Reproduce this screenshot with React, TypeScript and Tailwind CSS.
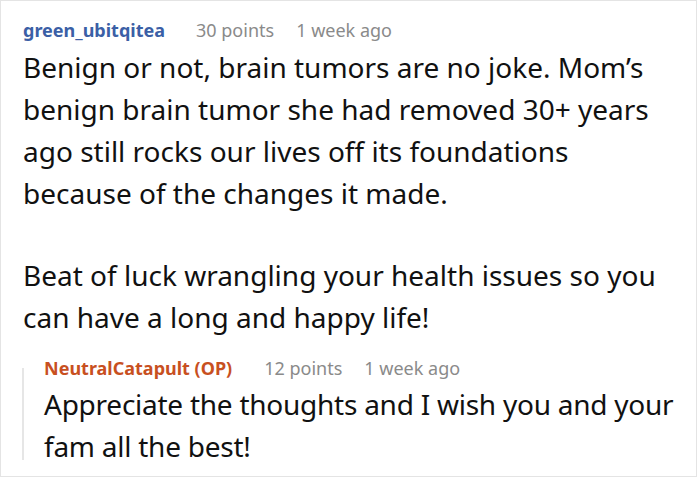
export default function App() {
  return (
    <div className="w-[700px] h-[478px] bg-white font-['Noto_Sans',sans-serif] text-[#111] overflow-hidden">
      <div className="w-[697px] h-[477px] border border-[#e4e4e4] pl-[22px] pr-3 pt-[17px]">
        <div className="flex items-baseline text-[18px] leading-[24px]">
          <span className="font-bold text-[#3b5fa6]">green_ubitqitea</span>
          <span className="ml-[31px] text-[#8a8a8a]">30 points</span>
          <span className="ml-[22px] text-[#8a8a8a]">1 week ago</span>
        </div>
        <div className="text-[28px] leading-[42px] mt-[4px] whitespace-nowrap">
          <p>
            Benign or not, brain tumors are no joke. Mom’s
            <br />
            benign brain tumor she had removed 30+ years
            <br />
            ago still rocks our lives off its foundations
            <br />
            because of the changes it made.
          </p>
          <p className="mt-[40px]">
            Beat of luck wrangling your health issues so you
            <br />
            can have a long and happy life!
          </p>
        </div>
        <div className="mt-[18px] -ml-[1px] flex">
          <div className="w-[2px] shrink-0 mt-[12px] mb-[7px] bg-[#e6e6e6]" />
          <div className="pl-[20px] min-w-0">
            <div className="flex items-baseline text-[18px] leading-[24px]">
              <span className="font-bold text-[#c8501f]">NeutralCatapult (OP)</span>
              <span className="ml-[32px] text-[#8a8a8a]">12 points</span>
              <span className="ml-[22px] text-[#8a8a8a]">1 week ago</span>
            </div>
            <p className="text-[28px] leading-[42px] mt-[3px] whitespace-nowrap tracking-[-0.25px]">
              Appreciate the thoughts and I wish you and your
              <br />
              fam all the best!
            </p>
          </div>
        </div>
      </div>
    </div>
  );
}
